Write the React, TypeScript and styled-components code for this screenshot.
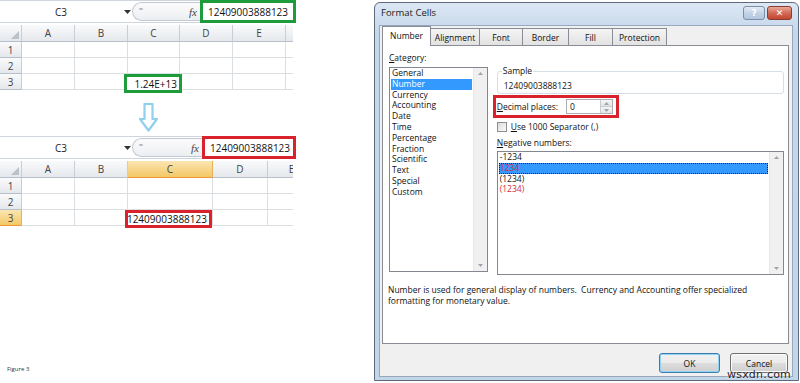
import React from 'react';
import styled, { createGlobalStyle } from 'styled-components';

const GlobalStyle = createGlobalStyle`
    html, body {
        margin: 0;
        padding: 0;
        background: #fff;
    }
    body {
        font-family: 'Open Sans', 'Noto Sans', sans-serif;
    }
`;

const Page = styled.div`
    position: relative;
    display: flex;
    width: 800px;
    height: 383px;
    overflow: hidden;
    background: #fff;
`;

/* ---------- spreadsheet side ---------- */

const LeftPane = styled.div`
    width: 300px;
    display: flex;
    flex-direction: column;
    font-family: 'Open Sans', sans-serif;
    color: #333;
`;

const SheetBlock = styled.div`
    display: flex;
    flex-direction: column;
    width: 296px;
`;

const FormulaBar = styled.div`
    display: flex;
    height: 23px;
    box-sizing: border-box;
    border-top: 1px solid #cfd5dd;
    border-bottom: 1px solid #cfd5dd;
    background: #fff;
`;

const NameBox = styled.div`
    width: 122px;
    display: flex;
    align-items: center;
    justify-content: center;
    font-size: 10px;
    color: #222;
`;

const DropArrow = styled.div`
    width: 10px;
    display: flex;
    align-items: center;
    justify-content: center;
`;

const Grip = styled.div<{ $w: number }>`
    width: ${p => p.$w}px;
    display: flex;
    align-items: center;
    justify-content: space-between;
    box-sizing: border-box;
    margin: 1px 0;
    padding: 0 3px 0 6px;
    border: 1px solid #c3c9d2;
    border-right: none;
    border-radius: 10px 0 0 10px;
    background: linear-gradient(#fbfbfc, #eceff2);
`;

const GripDot = styled.span`
    width: 4px;
    height: 2px;
    border-radius: 1px;
    background: #b4bac3;
    margin-top: -6px;
`;

const Fx = styled.span`
    font-family: 'Liberation Serif', serif;
    font-style: italic;
    font-size: 11px;
    color: #444;
`;

const FormulaField = styled.div<{ $accent: string }>`
    flex: 1;
    display: flex;
    align-items: center;
    box-sizing: border-box;
    margin-top: -1px;
    margin-bottom: -1px;
    padding-left: 5px;
    border: 3px solid ${p => p.$accent};
    font-size: 10px;
    color: #111;
    background: #fff;
`;

const SheetGrid = styled.div<{ $cols: string }>`
    display: grid;
    grid-template-columns: ${p => p.$cols};
    grid-template-rows: 17px repeat(3, 16px);
    margin-top: 2px;
    width: 293px;
    overflow-x: clip;
    overflow-y: visible;
    font-size: 10px;
`;

const HeadCell = styled.div<{ $active?: boolean }>`
    display: flex;
    align-items: center;
    justify-content: center;
    box-sizing: border-box;
    color: #444;
    background: ${p => (p.$active ? 'linear-gradient(#fbe6b2, #f3c866)' : 'linear-gradient(#f9fafb, #e5e8ec)')};
    border-right: 1px solid ${p => (p.$active ? '#e2b35c' : '#c9ced6')};
    border-bottom: 1px solid ${p => (p.$active ? '#f0963a' : '#b7bfc9')};
`;

const Corner = styled(HeadCell)`
    position: relative;
    overflow: hidden;
`;

const CornerMark = styled.svg`
    position: absolute;
    right: 2px;
    bottom: 2px;
`;

const Cell = styled.div`
    position: relative;
    box-sizing: border-box;
    background: #fff;
    border-right: 1px solid #dcdfe2;
    border-bottom: 1px solid #dcdfe2;
`;

const CellMark = styled.div<{ $accent: string; $l: number; $r: number; $b: number }>`
    position: absolute;
    left: ${p => p.$l}px;
    right: ${p => p.$r}px;
    top: 0;
    bottom: ${p => p.$b}px;
    z-index: 2;
    display: flex;
    align-items: center;
    justify-content: flex-end;
    padding-right: 2px;
    border: 3px solid ${p => p.$accent};
    background: #fff;
    color: #111;
    font-size: 10px;
`;

const ArrowRow = styled.div`
    height: 46px;
    display: flex;
    align-items: flex-start;
    padding: 13px 0 0 139px;
    box-sizing: border-box;
`;

const FigureLabel = styled.div`
    margin-top: auto;
    margin-bottom: 10px;
    padding-left: 7px;
    font-size: 6px;
    color: #333;
`;

type SheetProps = {
    accent: string;
    colWidths: number[];
    labels: string[];
    activeCol?: number;
    activeRow?: number;
    value: string;
    cellText: string;
    mark: { l: number; r: number; b: number };
};

const Sheet = ({ accent, colWidths, labels, activeCol, activeRow, value, cellText, mark }: SheetProps) => {
    const cols = ['22px', ...colWidths.map(w => `${w}px`)].join(' ');
    return (
        <SheetBlock>
            <FormulaBar>
                <NameBox>C3</NameBox>
                <DropArrow>
                    <svg width="7" height="4" viewBox="0 0 7 4">
                        <path d="M0 0h7L3.5 4z" fill="#333" />
                    </svg>
                </DropArrow>
                <Grip $w={accent === '#1e9b3b' ? 68 : 70}>
                    <GripDot />
                    <Fx>fx</Fx>
                </Grip>
                <FormulaField $accent={accent}>{value}</FormulaField>
            </FormulaBar>
            <SheetGrid $cols={cols}>
                <Corner>
                    <CornerMark width="8" height="8" viewBox="0 0 8 8">
                        <path d="M8 0v8H0z" fill="#bcc2c9" />
                    </CornerMark>
                </Corner>
                {colWidths.map((_, i) => (
                    <HeadCell key={i} $active={i === activeCol}>
                        {labels[i] ?? ''}
                    </HeadCell>
                ))}
                {[1, 2, 3].map(r => (
                    <React.Fragment key={r}>
                        <HeadCell $active={r === activeRow}>{r}</HeadCell>
                        {colWidths.map((_, c) => (
                            <Cell key={c}>
                                {r === 3 && c === 2 && (
                                    <CellMark $accent={accent} $l={mark.l} $r={mark.r} $b={mark.b}>
                                        {cellText}
                                    </CellMark>
                                )}
                            </Cell>
                        ))}
                    </React.Fragment>
                ))}
            </SheetGrid>
        </SheetBlock>
    );
};

/* ---------- dialog side ---------- */

const Dialog = styled.div`
    margin: 2px 0 0 74px;
    width: 425px;
    height: 379px;
    box-sizing: border-box;
    display: flex;
    flex-direction: column;
    padding: 0 5px 3px 4px;
    border: 1px solid #5d6b7c;
    border-radius: 6px 6px 0 0;
    background: linear-gradient(#dce7f3, #c5d7eb 30px, #c3d5e9);
    font-family: 'Open Sans', sans-serif;
    font-size: 8.5px;
    color: #111;
`;

const TitleBar = styled.div`
    height: 22px;
    display: flex;
    align-items: flex-start;
    padding-left: 2px;
`;

const TitleText = styled.div`
    font-size: 9.5px;
    line-height: 20px;
    color: #1a1a1a;
    flex: 1;
`;

const CaptionButton = styled.div<{ $close?: boolean }>`
    width: ${p => (p.$close ? 25 : 22)}px;
    height: 14px;
    margin-top: 3px;
    margin-left: ${p => (p.$close ? 2 : 0)}px;
    margin-right: ${p => (p.$close ? 1 : 0)}px;
    box-sizing: border-box;
    display: flex;
    align-items: center;
    justify-content: center;
    border: 1px solid ${p => (p.$close ? '#8a3a2e' : '#7a8ea8')};
    border-radius: 3px;
    background: ${p =>
        p.$close ? 'linear-gradient(#e8a99a, #d26a55 50%, #c3462f)' : 'linear-gradient(#e3ecf6, #c3d3e6 50%, #b2c6de)'};
    color: #fff;
    font-family: 'DejaVu Sans', sans-serif;
    font-size: 9px;
    font-weight: bold;
`;

const Body = styled.div`
    flex: 1;
    display: flex;
    flex-direction: column;
    padding: 0 3px 0 2px;
    border: 1px solid #98a8bc;
    background: #f0f0f0;
`;

const TabRow = styled.div`
    position: relative;
    z-index: 1;
    display: flex;
    align-items: flex-end;
    height: 20px;
    margin-bottom: -1px;
`;

const Tab = styled.div<{ $w: number; $selected?: boolean }>`
    width: ${p => p.$w}px;
    height: ${p => (p.$selected ? 20 : 17)}px;
    margin-bottom: ${p => (p.$selected ? 0 : 1)}px;
    margin-left: -1px;
    box-sizing: border-box;
    display: flex;
    align-items: center;
    justify-content: center;
    padding-bottom: ${p => (p.$selected ? 2 : 0)}px;
    border: 1px solid #898c95;
    border-bottom: none;
    background: ${p => (p.$selected ? '#fff' : 'linear-gradient(#f4f4f4, #e2e2e2)')};
    &:first-child {
        margin-left: 0;
    }
`;

const Panel = styled.div`
    height: 299px;
    box-sizing: border-box;
    padding: 7px 4px 0 6px;
    border: 1px solid #898c95;
    background: #fff;
`;

const Columns = styled.div`
    display: flex;
    gap: 9px;
`;

const LeftCol = styled.div`
    width: 99px;
    display: flex;
    flex-direction: column;
`;

const RightCol = styled.div`
    width: 288px;
    display: flex;
    flex-direction: column;
`;

const Label = styled.div<{ $mt?: number }>`
    line-height: 10px;
    margin-top: ${p => p.$mt ?? 0}px;
    white-space: nowrap;
`;

const Key = styled.span`
    text-decoration: underline;
`;

const ListBox = styled.div<{ $h: number; $mt: number }>`
    height: ${p => p.$h}px;
    margin-top: ${p => p.$mt}px;
    display: flex;
    box-sizing: border-box;
    border: 1px solid #828790;
    background: #fff;
`;

const ListItems = styled.div`
    flex: 1;
    padding: 0 1px;
`;

const ListItem = styled.div<{ $selected?: boolean; $focus?: boolean; $red?: boolean }>`
    height: 10.8px;
    line-height: ${p => (p.$focus ? 8.8 : 10.8)}px;
    padding-left: ${p => (p.$focus ? 0 : 1)}px;
    box-sizing: border-box;
    white-space: nowrap;
    color: ${p => (p.$red ? '#d42a3a' : p.$selected ? '#fff' : '#111')};
    background: ${p => (p.$selected ? '#3399ff' : 'transparent')};
    border: ${p => (p.$focus ? '1px dotted #1a1a40' : 'none')};
`;

const ScrollTrack = styled.div`
    width: 13px;
    display: flex;
    flex-direction: column;
    justify-content: space-between;
    align-items: center;
    padding: 4px 0;
    background: #f0f0f0;
    border-left: 1px solid #e8e8e8;
`;

const SampleBox = styled.fieldset`
    margin: 13px 0 0;
    padding: 5px 6px 2px;
    border: 1px solid #d5dfe5;
    border-radius: 3px;
    line-height: 10px;
    min-inline-size: 0;
`;

const SampleLegend = styled.legend`
    padding: 0 1px;
    margin-left: -2px;
    line-height: 10px;
`;

const DecimalRow = styled.div`
    display: flex;
    align-items: center;
    gap: 8px;
    align-self: flex-start;
    margin: 1px 0 0 -4px;
    height: 23px;
    box-sizing: border-box;
    padding: 0 3px 0 1px;
    border: 3px solid #d8222c;
`;

const SpinBox = styled.div`
    width: 47px;
    height: 15px;
    display: flex;
    box-sizing: border-box;
    border: 1px solid #abadb3;
    background: #fff;
`;

const SpinValue = styled.div`
    flex: 1;
    padding-left: 3px;
    line-height: 13px;
`;

const SpinButtons = styled.div`
    width: 11px;
    display: flex;
    flex-direction: column;
    border-left: 1px solid #c9cbd0;
`;

const SpinHalf = styled.div`
    flex: 1;
    display: flex;
    align-items: center;
    justify-content: center;
    background: linear-gradient(#f6f6f6, #e2e4e7);
    & + & {
        border-top: 1px solid #c9cbd0;
    }
`;

const CheckRow = styled.div`
    display: flex;
    align-items: center;
    gap: 4px;
    margin-top: 3px;
    height: 11px;
`;

const CheckBox = styled.div`
    width: 10px;
    height: 10px;
    box-sizing: border-box;
    border: 1px solid #8e8f8f;
    background: linear-gradient(135deg, #dcdcdc, #fafafa);
`;

const Description = styled.div`
    margin-top: 9px;
    line-height: 11px;
    padding-left: 0;
    margin-left: -1px;
`;

const Footer = styled.div`
    display: flex;
    justify-content: flex-end;
    gap: 10px;
    margin-top: 9px;
    padding-right: 1px;
`;

const Button = styled.div<{ $w: number; $default?: boolean }>`
    width: ${p => p.$w}px;
    height: 20px;
    box-sizing: border-box;
    display: flex;
    align-items: center;
    justify-content: center;
    border: 1px solid ${p => (p.$default ? '#3d7bad' : '#707070')};
    border-radius: 3px;
    background: linear-gradient(#f2f2f2, #ebebeb 50%, #dddddd 51%, #cfcfcf);
    box-shadow: ${p => (p.$default ? 'inset 0 0 0 1px #8fd4f5' : 'inset 0 0 0 1px #fbfbfb')};
`;

const Watermark = styled.div`
    position: absolute;
    right: 9px;
    bottom: 2px;
    font-family: 'DejaVu Sans', sans-serif;
    font-size: 11px;
    letter-spacing: 0.2px;
    color: #262626;
    text-shadow: 0 0 2px #fff;
`;

const Tri = ({ down }: { down?: boolean }) => (
    <svg width="5" height="3" viewBox="0 0 5 3">
        <path d={down ? 'M0 0h5L2.5 3z' : 'M0 3h5L2.5 0z'} fill="#a0a4aa" />
    </svg>
);

const categories = [
    'General',
    'Number',
    'Currency',
    'Accounting',
    'Date',
    'Time',
    'Percentage',
    'Fraction',
    'Scientific',
    'Text',
    'Special',
    'Custom',
];

const tabs = [
    { label: 'Number', w: 49 },
    { label: 'Alignment', w: 50 },
    { label: 'Font', w: 44 },
    { label: 'Border', w: 47 },
    { label: 'Fill', w: 45 },
    { label: 'Protection', w: 55 },
];

const FormatCells = () => (
    <Dialog>
        <TitleBar>
            <TitleText>Format Cells</TitleText>
            <CaptionButton>?</CaptionButton>
            <CaptionButton $close>✕</CaptionButton>
        </TitleBar>
        <Body>
            <TabRow>
                {tabs.map((t, i) => (
                    <Tab key={t.label} $w={t.w} $selected={i === 0}>
                        {t.label}
                    </Tab>
                ))}
            </TabRow>
            <Panel>
                <Columns>
                    <LeftCol>
                        <Label>
                            <Key>C</Key>ategory:
                        </Label>
                        <ListBox $h={205} $mt={4}>
                            <ListItems>
                                {categories.map(c => (
                                    <ListItem key={c} $selected={c === 'Number'}>
                                        {c}
                                    </ListItem>
                                ))}
                            </ListItems>
                            <ScrollTrack>
                                <Tri />
                                <Tri down />
                            </ScrollTrack>
                        </ListBox>
                    </LeftCol>
                    <RightCol>
                        <SampleBox>
                            <SampleLegend>Sample</SampleLegend>
                            <div>12409003888123</div>
                        </SampleBox>
                        <DecimalRow>
                            <Label>
                                <Key>D</Key>ecimal places:
                            </Label>
                            <SpinBox>
                                <SpinValue>0</SpinValue>
                                <SpinButtons>
                                    <SpinHalf>
                                        <Tri />
                                    </SpinHalf>
                                    <SpinHalf>
                                        <Tri down />
                                    </SpinHalf>
                                </SpinButtons>
                            </SpinBox>
                        </DecimalRow>
                        <CheckRow>
                            <CheckBox />
                            <Label>
                                <Key>U</Key>se 1000 Separator (,)
                            </Label>
                        </CheckRow>
                        <Label $mt={6}>
                            <Key>N</Key>egative numbers:
                        </Label>
                        <ListBox $h={124} $mt={3}>
                            <ListItems>
                                <ListItem>-1234</ListItem>
                                <ListItem $selected $focus $red>
                                    1234
                                </ListItem>
                                <ListItem>(1234)</ListItem>
                                <ListItem $red>(1234)</ListItem>
                            </ListItems>
                            <ScrollTrack>
                                <Tri />
                                <Tri down />
                            </ScrollTrack>
                        </ListBox>
                    </RightCol>
                </Columns>
                <Description>
                    Number is used for general display of numbers.&nbsp; Currency and Accounting offer specialized
                    <br />
                    formatting for monetary value.
                </Description>
            </Panel>
            <Footer>
                <Button $w={61} $default>
                    OK
                </Button>
                <Button $w={58}>Cancel</Button>
            </Footer>
        </Body>
    </Dialog>
);

const App = () => (
    <>
        <GlobalStyle />
        <Page>
            <LeftPane>
                <Sheet
                    accent="#1e9b3b"
                    colWidths={[53, 53, 52, 53, 53, 53]}
                    labels={['A', 'B', 'C', 'D', 'E']}
                    value="12409003888123"
                    cellText="1.24E+13"
                    mark={{ l: -4, r: -3, b: -4 }}
                />
                <ArrowRow>
                    <svg width="19" height="29" viewBox="0 0 19 29">
                        <path
                            d="M5.5 1h8v15h4.5L9.5 27.5 1 16h4.5z"
                            fill="#fff"
                            stroke="#8fd1ea"
                            strokeWidth="2.2"
                            strokeLinejoin="round"
                        />
                    </svg>
                </ArrowRow>
                <Sheet
                    accent="#d8222c"
                    colWidths={[53, 53, 85, 55, 48]}
                    labels={['A', 'B', 'C', 'D', 'E']}
                    activeCol={2}
                    activeRow={3}
                    value="12409003888123"
                    cellText="12409003888123"
                    mark={{ l: -3, r: 0, b: -3 }}
                />
                <FigureLabel>Figure 3</FigureLabel>
            </LeftPane>
            <FormatCells />
            <Watermark>wsxdn.com</Watermark>
        </Page>
    </>
);

export default App;
